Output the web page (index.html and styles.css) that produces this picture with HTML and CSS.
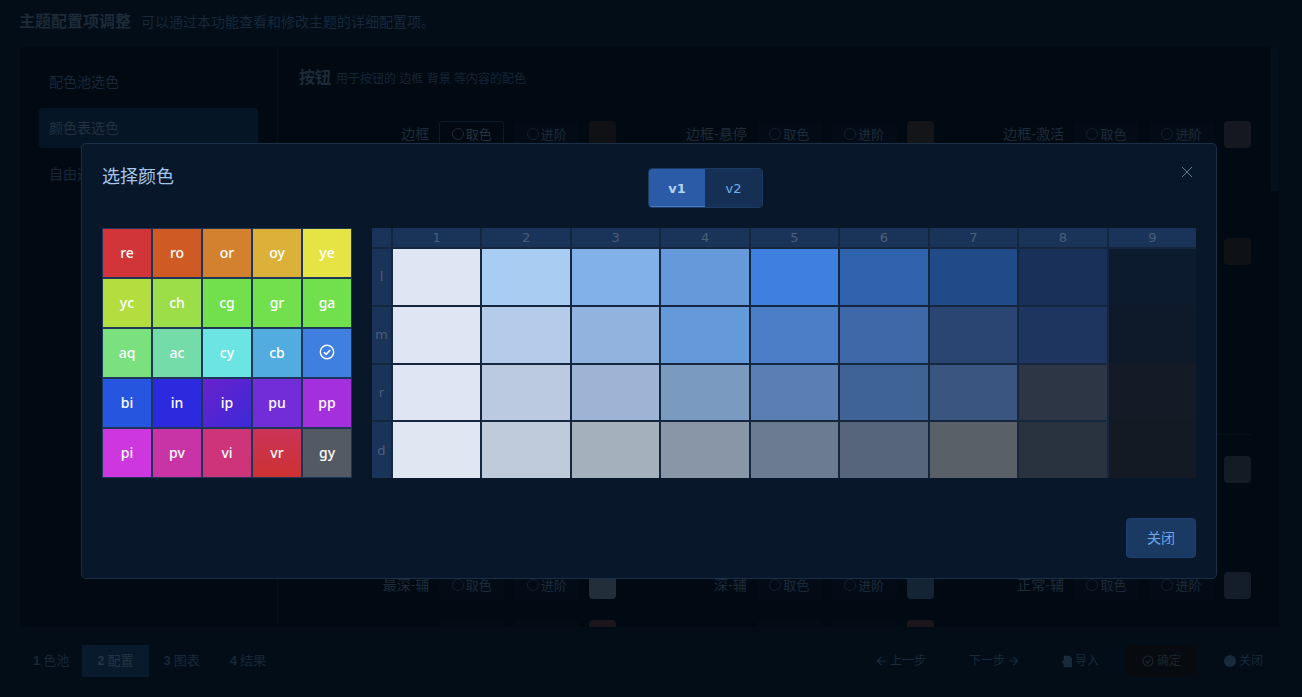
FILE: index.html
```html
<!DOCTYPE html>
<html lang="zh-CN">
<head>
  <meta charset="UTF-8">
  <title>主题配置项调整</title>
  <link rel="stylesheet" href="styles.css">
</head>
<body>
  <div class="page">
    <header class="page-head">
      <h1>主题配置项调整</h1>
      <span>可以通过本功能查看和修改主题的详细配置项。</span>
    </header>

    <section class="panel">
      <nav class="side">
        <a>配色池选色</a>
        <a class="active">颜色表选色</a>
        <a>自由选色</a>
      </nav>
      <div class="main">
        <div class="scrollbar"></div>
        <div class="main-head"><b>按钮</b><span>用于按钮的 边框 背景 等内容的配色</span></div>

        <!-- top row -->
        <div class="row">
          <div class="field"><label>边框</label><button class="pick on"><i></i>取色</button><button class="pick"><i></i>进阶</button><em class="sw s1"></em></div>
          <div class="field"><label>边框-悬停</label><button class="pick"><i></i>取色</button><button class="pick"><i></i>进阶</button><em class="sw s2"></em></div>
          <div class="field"><label>边框-激活</label><button class="pick"><i></i>取色</button><button class="pick"><i></i>进阶</button><em class="sw s3"></em></div>
        </div>

        <!-- rows behind the dialog, only the last swatch peeks out -->
        <div class="row row-a">
          <div class="field col3"><em class="sw s4"></em></div>
        </div>
        <div class="divider"></div>
        <div class="row row-b">
          <div class="field col3"><em class="sw s5"></em></div>
        </div>

        <div class="row row-c">
          <div class="field"><label>最深-辅</label><button class="pick"><i></i>取色</button><button class="pick"><i></i>进阶</button><em class="sw s6"></em></div>
          <div class="field"><label>深-辅</label><button class="pick"><i></i>取色</button><button class="pick"><i></i>进阶</button><em class="sw s7"></em></div>
          <div class="field"><label>正常-辅</label><button class="pick"><i></i>取色</button><button class="pick"><i></i>进阶</button><em class="sw s8"></em></div>
        </div>
        <div class="row row-d">
          <div class="field"><button class="pick"></button><button class="pick"></button><em class="sw s9"></em></div>
          <div class="field"><button class="pick"></button><button class="pick"></button><em class="sw s9"></em></div>
        </div>
      </div>
    </section>

    <footer class="page-foot">
      <div class="steps">
        <a><b>1</b>色池</a>
        <a class="active"><b>2</b>配置</a>
        <a><b>3</b>图表</a>
        <a><b>4</b>结果</a>
      </div>
      <div class="actions">
        <a><svg width="11" height="12" viewBox="0 0 12 12"><path d="M11 6H1.5M6 1.5 1.5 6 6 10.5" fill="none" stroke="currentColor" stroke-width="1.3"/></svg>上一步</a>
        <a>下一步<svg width="11" height="12" viewBox="0 0 12 12"><path d="M1 6h9.5M6 1.5 10.5 6 6 10.5" fill="none" stroke="currentColor" stroke-width="1.3"/></svg></a>
        <a><svg width="10" height="13" viewBox="0 0 12 14"><path d="M3 0h6l3 3v10a1 1 0 0 1-1 1H3a1 1 0 0 1-1-1V9H0V6h2V1a1 1 0 0 1 1-1z" fill="currentColor"/></svg>导入</a>
        <a class="confirm"><svg width="12" height="12" viewBox="0 0 12 12"><circle cx="6" cy="6" r="5" fill="none" stroke="currentColor" stroke-width="1.2"/><path d="M3.5 6 5.4 8 8.6 4.4" fill="none" stroke="currentColor" stroke-width="1.2"/></svg>确定</a>
        <a><svg width="12" height="12" viewBox="0 0 12 12"><circle cx="6" cy="6" r="6" fill="currentColor"/></svg>关闭</a>
      </div>
    </footer>
  </div>

  <!-- color dialog -->
  <div class="dialog">
    <svg class="dialog-close" width="12" height="12" viewBox="0 0 12 12"><path d="M1 1l10 10M11 1 1 11" fill="none" stroke="currentColor" stroke-width="1"/></svg>
    <div class="dialog-head">
      <h2>选择颜色</h2>
      <div class="seg">
        <button class="on">v1</button>
        <button>v2</button>
      </div>
    </div>
    <div class="dialog-body">
      <div class="palette">
        <div class="p-re">re</div><div class="p-ro">ro</div><div class="p-or">or</div><div class="p-oy">oy</div><div class="p-ye">ye</div>
        <div class="p-yc">yc</div><div class="p-ch">ch</div><div class="p-cg">cg</div><div class="p-gr">gr</div><div class="p-ga">ga</div>
        <div class="p-aq">aq</div><div class="p-ac">ac</div><div class="p-cy">cy</div><div class="p-cb">cb</div>
        <div class="p-bl"><svg width="16" height="16" viewBox="0 0 16 16"><circle cx="8" cy="8" r="6.7" fill="none" stroke="#fff" stroke-width="1.4"/><path d="M4.9 8.2 7.1 10.4 11.2 6" fill="none" stroke="#fff" stroke-width="1.6"/></svg></div>
        <div class="p-bi">bi</div><div class="p-in">in</div><div class="p-ip">ip</div><div class="p-pu">pu</div><div class="p-pp">pp</div>
        <div class="p-pi">pi</div><div class="p-pv">pv</div><div class="p-vi">vi</div><div class="p-vr">vr</div><div class="p-gy">gy</div>
      </div>
      <div class="shades">
        <div class="hd"></div><div class="hd">1</div><div class="hd">2</div><div class="hd">3</div><div class="hd">4</div><div class="hd">5</div><div class="hd">6</div><div class="hd">7</div><div class="hd">8</div><div class="hd">9</div>
        <div class="hd">l</div><div class="l1"></div><div class="l2"></div><div class="l3"></div><div class="l4"></div><div class="l5"></div><div class="l6"></div><div class="l7"></div><div class="l8"></div><div class="l9"></div>
        <div class="hd">m</div><div class="m1"></div><div class="m2"></div><div class="m3"></div><div class="m4"></div><div class="m5"></div><div class="m6"></div><div class="m7"></div><div class="m8"></div><div class="m9"></div>
        <div class="hd">r</div><div class="r1"></div><div class="r2"></div><div class="r3"></div><div class="r4"></div><div class="r5"></div><div class="r6"></div><div class="r7"></div><div class="r8"></div><div class="r9"></div>
        <div class="hd">d</div><div class="d1"></div><div class="d2"></div><div class="d3"></div><div class="d4"></div><div class="d5"></div><div class="d6"></div><div class="d7"></div><div class="d8"></div><div class="d9"></div>
      </div>
    </div>
    <div class="dialog-foot">
      <button>关闭</button>
    </div>
  </div>
</body>
</html>
```

FILE: styles.css
```css
* {
  box-sizing: border-box;
}
html, body {
  margin: 0;
  height: 100%;
  overflow: hidden;
}
body {
  font-family: "Liberation Sans", "Noto Sans CJK SC", sans-serif;
  font-size: 13px;
  background: #020d18;
  color: #1b2a3a;
}
button {
  font-family: inherit;
  cursor: pointer;
}

/* page behind the dialog */
.page {
  height: 697px;
  display: flex;
  flex-direction: column;
}
.page-head {
  height: 47px;
  padding: 11px 0 15px 19px;
  display: flex;
  align-items: center;
  line-height: 22px;
  gap: 10px;
}
.page-head h1 {
  margin: 0;
  font-size: 16px;
  color: #1d2b39;
}
.page-head span {
  font-size: 14px;
  color: #18283a;
}
.panel {
  height: 580px;
  margin: 0 23px 0 20px;
  display: flex;
  background: #010a13;
  border-radius: 4px;
  overflow: hidden;
}
.side {
  width: 258px;
  padding: 15px 19px 0;
  border-right: 1px solid #030f19;
  display: flex;
  flex-direction: column;
  gap: 6px;
}
.side a {
  height: 40px;
  line-height: 40px;
  padding-left: 10px;
  border-radius: 4px;
  font-size: 14px;
  color: #18283a;
}
.side a.active {
  background: #061526;
  color: #223040;
}
.main {
  flex: 1;
  position: relative;
  padding: 0 28px 0 21px;
}
.scrollbar {
  position: absolute;
  top: 0;
  right: 0;
  width: 8px;
  height: 144px;
  background: #04111c;
}
.main-head {
  height: 54px;
  padding-top: 20px;
  border-bottom: 1px solid #020c16;
  line-height: 22px;
}
.main-head b {
  font-size: 16px;
  color: #1d2b39;
  margin-right: 5px;
}
.main-head span {
  font-size: 12px;
  color: #162536;
}
.row {
  display: grid;
  grid-template-columns: repeat(3, 1fr);
  height: 28px;
  margin-top: 20px;
}
.row-a {
  margin-top: 89px;
}
.divider {
  height: 1px;
  margin-top: 168px;
  background: #04111c;
}
.row-b {
  margin-top: 21px;
}
.row-c {
  margin-top: 88px;
}
.field {
  display: flex;
  align-items: flex-start;
  justify-content: flex-end;
  gap: 10px;
}
.col3 {
  grid-column: 3;
}
.field label {
  line-height: 27px;
  font-size: 14px;
  color: #1e2c3a;
}
.pick {
  width: 65px;
  height: 28px;
  padding: 0 0 3px;
  border: 1px solid #030c16;
  border-radius: 3px;
  background: #030c16;
  color: #1c2b3a;
  font-size: 13px;
  display: flex;
  align-items: center;
  justify-content: center;
  gap: 2px;
}
.pick i {
  width: 12px;
  height: 12px;
  border: 1px solid #132029;
  border-radius: 50%;
}
.pick.on {
  background: #010a13;
  border-color: #0c1b2c;
  color: #26333f;
}
.pick.on i {
  border-color: #1e2b36;
}
.sw {
  width: 27px;
  height: 27px;
  border-radius: 4px;
}
.s1 { background: #0f1115; }
.s2 { background: #131519; }
.s3 { background: #15191f; }
.s4 { background: #0e1115; }
.s5 { background: #131b25; }
.s6 { background: #222e3a; }
.s7 { background: #152435; }
.s8 { background: #141e2a; }
.s9 { background: #1a161c; }

.page-foot {
  margin-top: 18px;
  padding: 0 23px 0 16px;
  display: flex;
  justify-content: space-between;
}
.steps, .actions {
  display: flex;
  height: 32px;
  line-height: 32px;
}
.steps a {
  padding: 0 15px;
  color: #182838;
}
.steps a:first-child {
  padding: 0 13px 0 17px;
}
.steps a b {
  margin-right: 3px;
}
.steps a.active {
  background: #091a2d;
  color: #243443;
}
.actions {
  gap: 11px;
}
.actions a {
  padding: 0 16px;
  display: flex;
  align-items: center;
  gap: 3px;
  font-size: 12px;
  color: #182a3c;
}
.actions .confirm {
  background: #070b10;
  color: #1a2528;
}

/* dialog */
.dialog {
  position: absolute;
  left: 81px;
  top: 143px;
  width: 1136px;
  height: 436px;
  padding: 24px 20px 20px;
  background: #08182a;
  border: 1px solid #1b3046;
  border-radius: 5px;
}
.dialog-close {
  position: absolute;
  top: 22px;
  right: 23px;
  color: #66798e;
}
.dialog-head {
  display: flex;
  height: 40px;
}
.dialog-head h2 {
  width: 546px;
  margin: 0;
  font-size: 18px;
  font-weight: normal;
  line-height: 18px;
  color: #a5c7ee;
}
.seg {
  display: flex;
  width: 115px;
  height: 40px;
  border: 1px solid #1d3c64;
  border-radius: 4px;
  overflow: hidden;
}
.seg button {
  flex: 1;
  border: 0;
  padding: 0;
  background: #152f55;
  color: #6fb0ee;
  font-family: "DejaVu Sans", sans-serif;
  font-size: 13px;
}
.seg button.on {
  flex: 0 0 56px;
  background: #2b5ba6;
  color: #b5d1f2;
  font-weight: bold;
  box-shadow: inset 0 -1px 0 #4a79bd;
}
.dialog-body {
  display: flex;
  gap: 20px;
  margin-top: 20px;
}
.palette {
  display: grid;
  grid-template-columns: repeat(5, 50px);
  grid-template-rows: repeat(5, 50px);
  flex: none;
}
.palette div {
  display: flex;
  align-items: center;
  justify-content: center;
  border: 1px solid #1c3558;
  padding-bottom: 2px;
  color: #fff;
  font-family: "Noto Sans", sans-serif;
  font-size: 14px;
  font-weight: 500;
}
.p-re { background: #d1353a; }
.p-ro { background: #d05a24; }
.p-or { background: #d4812f; }
.p-oy { background: #dcb13a; }
.p-ye { background: #e6e345; }
.p-yc { background: #b4dd40; }
.p-ch { background: #9cde48; }
.p-cg, .p-gr, .p-ga { background: #72e04c; }
.p-aq { background: #7be07e; }
.p-ac { background: #74dca8; }
.p-cy { background: #6ce4e4; }
.p-cb { background: #52acdf; }
.p-bl { background: #3f7fe0; }
.p-bi { background: #2655e0; }
.p-in { background: #2b2ade; }
.p-ip { background: linear-gradient(135deg, #6a22cc, #3b29d8); }
.p-pu { background: #722dd9; }
.p-pp { background: #a330dc; }
.p-pi { background: #cc38de; }
.p-pv { background: #c833a6; }
.p-vi { background: #cd347a; }
.p-vr { background: linear-gradient(#cc3358, #cc3232); }
.p-gy { background: #535a63; }

.shades {
  flex: 1;
  display: grid;
  grid-template-columns: 19px repeat(9, 1fr);
  grid-template-rows: 19px repeat(4, 1fr);
  gap: 2px;
  background: #14273f;
  height: 250px;
}
.hd {
  background: #1a3358;
  color: #4b5f79;
  font-family: "DejaVu Sans", sans-serif;
  font-size: 13px;
  display: flex;
  align-items: center;
  justify-content: center;
}
.m9, .r9, .d9 {
  margin-top: -2px;
}
.l1 { background: #dde6f2; }
.l2 { background: #a9ccf3; }
.l3 { background: #82b1ea; }
.l4 { background: #6599d9; }
.l5 { background: #3e7fe0; }
.l6 { background: #3063ae; }
.l7 { background: #214b88; }
.l8 { background: #193158; }
.l9 { background: #0c1b2d; }
.m1 { background: #dde6f2; }
.m2 { background: #b4cbea; }
.m3 { background: #92b3de; }
.m4 { background: #659ada; }
.m5 { background: #4a7fc8; }
.m6 { background: #3e68a8; }
.m7 { background: #2b4572; }
.m8 { background: #1e3560; }
.m9 { background: #0e1a2a; }
.r1 { background: #dde6f2; }
.r2 { background: #bbcade; }
.r3 { background: #9db4d4; }
.r4 { background: #7a9ac0; }
.r5 { background: #5a7fb4; }
.r6 { background: #406396; }
.r7 { background: #3a5580; }
.r8 { background: #2c3644; }
.r9 { background: #141b26; }
.d1 { background: #dfe7f3; }
.d2 { background: #bfcbda; }
.d3 { background: #a5b0bd; }
.d4 { background: #8896a8; }
.d5 { background: #6b7b90; }
.d6 { background: #56657a; }
.d7 { background: #5a6068; }
.d8 { background: #29333f; }
.d9 { background: #131a24; }

.dialog-foot {
  display: flex;
  justify-content: flex-end;
  margin-top: 40px;
}
.dialog-foot button {
  width: 70px;
  height: 40px;
  padding: 0 0 2px;
  border: 1px solid #1f406c;
  border-radius: 4px;
  background: #1a3a64;
  color: #6fa8e8;
  font-size: 14px;
}
```
